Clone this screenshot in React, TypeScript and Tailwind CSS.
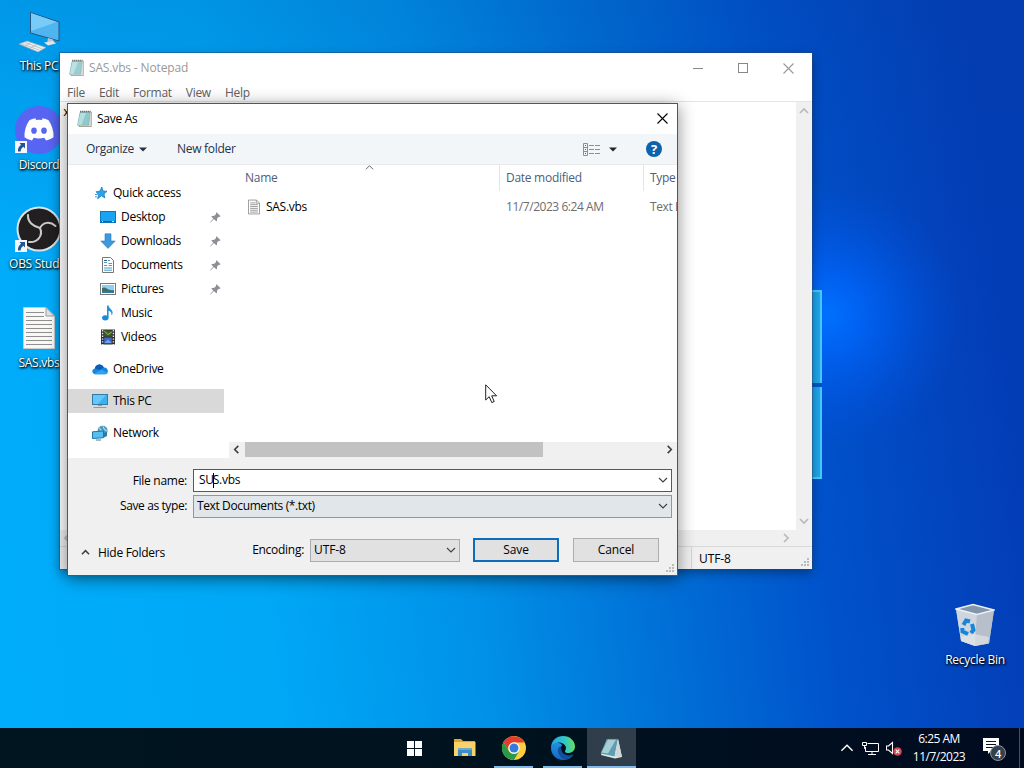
import type { ReactNode } from "react";

type Direction = "up" | "down" | "left" | "right";

interface ChevronProps {
  dir: Direction;
  size?: number;
  weight?: number;
  className?: string;
}

interface NavItem {
  label: string;
  icon: ReactNode;
  pinned?: boolean;
  nested?: boolean;
  selected?: boolean;
  spaced?: boolean;
}

interface DesktopIconProps {
  label: string;
  className: string;
  shortcut?: boolean;
  children: ReactNode;
}

const chevronPaths: Record<Direction, string> = {
  up: "M1 7 L5 3 L9 7",
  down: "M1 3 L5 7 L9 3",
  left: "M7 1 L3 5 L7 9",
  right: "M3 1 L7 5 L3 9",
};

function Chevron({ dir, size = 10, weight = 1.1, className = "text-[#404040]" }: ChevronProps) {
  return (
    <svg width={size} height={size} viewBox="0 0 10 10" className={`shrink-0 ${className}`}>
      <path d={chevronPaths[dir]} fill="none" stroke="currentColor" strokeWidth={weight} />
    </svg>
  );
}

function CloseIcon({ size }: { size: number }) {
  return (
    <svg width={size} height={size} viewBox="0 0 11 11" className="shrink-0">
      <path d="M.5 .5 L10.5 10.5 M10.5 .5 L.5 10.5" stroke="currentColor" strokeWidth="1.1" />
    </svg>
  );
}

function NotepadIcon({ faded = false }: { faded?: boolean }) {
  return (
    <svg width="16" height="18" viewBox="0 0 16 18" className={`shrink-0 ${faded ? "opacity-90" : ""}`}>
      <path d="M4.5 2 H15.3 L15.3 16.5 H3Z" fill="#e3e6df" stroke="#8b8772" strokeWidth=".7" />
      <path d="M4 2.5 H14 L12.8 15.3 H1.5Z" fill="#8fc9cd" stroke="#6fa5a9" strokeWidth=".5" />
      <path d="M4.4 3 H10 L5.5 15 H2Z" fill="#b5dedf" />
      <path d="M4.3 1.6 H14.7" stroke="#444" strokeWidth="1.5" strokeDasharray="1 1" />
    </svg>
  );
}

function PageIcon({ width, height }: { width: number; height: number }) {
  return (
    <svg width={width} height={height} viewBox="0 0 13 16" className="shrink-0">
      <path d="M.5 .5 H9.2 L12.5 3.8 V15.5 H.5Z" fill="#fff" stroke="#888" strokeWidth=".9" />
      <path d="M9 .5 V4 H12.5" fill="none" stroke="#888" strokeWidth=".8" />
      <path d="M2.3 3.5 H8 M2.3 5.5 H10.7 M2.3 7.5 H10.7 M2.3 9.5 H10.7 M2.3 11.5 H10.7 M2.3 13.5 H10.7" stroke="#8a8a8a" strokeWidth=".9" />
    </svg>
  );
}

function PinIcon() {
  return (
    <svg width="11" height="11" viewBox="0 0 11 11" className="shrink-0">
      <path d="M6.5 .3 L10.6 4.3 L9.4 5 L8.8 4.8 L7.1 6.5 L7 8.8 L6.2 9.3 L4 7.1 L.5 10.6 L.2 10.3 L3.3 6.6 L1.4 4.8 L2 4 L4.4 3.8 L6.1 2.1 L5.9 1.2Z" fill="#8c8f94" />
    </svg>
  );
}

function StarIcon() {
  return (
    <svg width="16" height="16" viewBox="0 0 16 16">
      <path d="M9.8 2 L11 6 L15 6.3 L12 8.9 L12.9 13 L9.4 10.8 L5.6 13.8 L6.8 9.6 L4 6.8 L8 6.1Z" fill="#2ba2ea" stroke="#167fc5" strokeWidth=".8" />
      <path d="M3 9.5 H5.8 M3 11.8 H5" stroke="#3a98d5" />
    </svg>
  );
}

function DesktopGlyph() {
  return (
    <svg width="16" height="16" viewBox="0 0 16 16">
      <rect x=".5" y="2.5" width="15" height="11" fill="#18a4f2" stroke="#1177b9" />
      <path d="M1 12.5 H15" stroke="#0b62a1" />
      <path d="M2 12.5 H3 M12 12.5 H14" stroke="#b9e7ff" />
    </svg>
  );
}

function DownloadGlyph() {
  return (
    <svg width="16" height="16" viewBox="0 0 16 16">
      <path d="M5 .8 H11 V8 H15.2 L8 15.4 L.8 8 H5Z" fill="#3f98d9" stroke="#2a7cbd" strokeWidth=".6" />
    </svg>
  );
}

function DocumentGlyph() {
  return (
    <svg width="16" height="16" viewBox="0 0 16 16">
      <path d="M2.5 .5 H10.5 L13.5 3.5 V15.5 H2.5Z" fill="#fff" stroke="#777" />
      <path d="M4 5.5 H7 M4 8.5 H7 M4 11 H12 M4 13.2 H12 M8.5 6.5 H12 M8.5 8.5 H12 M8 3.5 H10" stroke="#4a9ac9" />
      <path d="M4 3.5 H7" stroke="#315c7c" />
    </svg>
  );
}

function PictureGlyph() {
  return (
    <svg width="16" height="16" viewBox="0 0 16 16">
      <rect x=".5" y="2.5" width="15" height="11" fill="#fff" stroke="#777" />
      <rect x="2" y="4" width="12" height="8" fill="#8fd0ee" />
      <path d="M2 7 Q5 5.5 8 8.2 Q11 9.5 14 9 V12 H2Z" fill="#3e706b" />
      <path d="M2 10.5 H14 V12 H2Z" fill="#3179a8" />
    </svg>
  );
}

function MusicGlyph() {
  return (
    <svg width="16" height="16" viewBox="0 0 16 16">
      <ellipse cx="5.3" cy="12.8" rx="3.2" ry="2.6" fill="#1689d8" />
      <path d="M7 .5 H8.6 C8.6 3.5 13 4.5 12.6 8 C12.4 9.5 11.8 10 11.3 10.3 C12 7.8 10.5 6.3 8.6 5.8 V12.5 H7Z" fill="#1c94e4" />
    </svg>
  );
}

function VideoGlyph() {
  return (
    <svg width="16" height="16" viewBox="0 0 16 16">
      <rect x="1" y=".5" width="14" height="15" fill="#2e2e30" />
      <path d="M2.6 1 V16 M13.4 1 V16" stroke="#e9e9e9" strokeWidth="1.4" strokeDasharray="1.4 1.4" />
      <rect x="4.2" y="1.5" width="7.6" height="6" fill="#3b5c33" />
      <path d="M4.2 2 L8 5.5 L11.8 3" stroke="#a9ba3d" fill="none" />
      <rect x="4.2" y="8.5" width="7.6" height="6" fill="#3d67c8" />
      <path d="M4.2 14 L8 10.5 L11.8 14Z" fill="#6fa3ed" />
    </svg>
  );
}

function CloudGlyph() {
  return (
    <svg width="16" height="16" viewBox="0 0 16 16">
      <path d="M3.5 13.2 C-.5 13.2 -.7 8 2.8 7.4 C3.6 3 9.8 1.6 11.8 6.5 C16.5 6 17.5 13.2 13 13.2Z" fill="#1586dc" />
      <path d="M2.8 7.4 C3.6 3 9.8 1.6 11.8 6.5 L8 9Z" fill="#0c5eb5" />
      <path d="M2 12.9 L9.5 8.6 L15.5 12 C15 13 14 13.2 13 13.2 H3.5Z" fill="#2ba5ef" />
    </svg>
  );
}

function ComputerGlyph() {
  return (
    <svg width="16" height="16" viewBox="0 0 16 16">
      <rect x=".5" y="1.5" width="15" height="10" fill="#38b1f1" stroke="#3779a3" />
      <path d="M1 2 H14 L6 11 H1Z" fill="#65c8f8" />
      <path d="M6 12.5 H10 M1.5 14.5 H14.5" stroke="#76a3bd" />
    </svg>
  );
}

function NetworkGlyph() {
  return (
    <svg width="16" height="16" viewBox="0 0 16 16">
      <circle cx="10.6" cy="5.8" r="5" fill="#4b97bb" />
      <path d="M7 3 Q10 4.5 8.5 7 M11 1.3 Q12 5 15 6" stroke="#a8d9e7" strokeWidth="1.2" fill="none" />
      <path d="M.5 6.8 L11.5 6 V12.7 L.5 13.5Z" fill="#54bff1" stroke="#2375a2" />
      <path d="M12 8 L15 7 V11 L12 12.5Z" fill="#2e79aa" />
      <path d="M4 15 H9" stroke="#3b7ea3" />
    </svg>
  );
}

const navItems: NavItem[] = [
  { label: "Quick access", icon: <StarIcon /> },
  { label: "Desktop", icon: <DesktopGlyph />, nested: true, pinned: true },
  { label: "Downloads", icon: <DownloadGlyph />, nested: true, pinned: true },
  { label: "Documents", icon: <DocumentGlyph />, nested: true, pinned: true },
  { label: "Pictures", icon: <PictureGlyph />, nested: true, pinned: true },
  { label: "Music", icon: <MusicGlyph />, nested: true },
  { label: "Videos", icon: <VideoGlyph />, nested: true },
  { label: "OneDrive", icon: <CloudGlyph />, spaced: true },
  { label: "This PC", icon: <ComputerGlyph />, spaced: true, selected: true },
  { label: "Network", icon: <NetworkGlyph />, spaced: true },
];

function Wallpaper() {
  return (
    <svg width="1024" height="768" className="absolute inset-0">
      <defs>
        <linearGradient id="sky" x1="0" y1="520" x2="1010" y2="400" gradientUnits="userSpaceOnUse">
          <stop offset="0" stopColor="#00adfb" />
          <stop offset=".25" stopColor="#00a8f6" />
          <stop offset=".45" stopColor="#0092e8" />
          <stop offset=".64" stopColor="#006fd6" />
          <stop offset=".8" stopColor="#0052cb" />
          <stop offset="1" stopColor="#033db6" />
        </linearGradient>
        <linearGradient id="topShade" x1="0" x2="0" y1="0" y2="1">
          <stop offset="0" stopColor="#003c98" stopOpacity=".18" />
          <stop offset=".35" stopColor="#003c98" stopOpacity="0" />
        </linearGradient>
        <radialGradient id="glow" cx="828" cy="315" r="135" gradientUnits="userSpaceOnUse">
          <stop offset="0" stopColor="#0070ff" />
          <stop offset=".3" stopColor="#0064f8" stopOpacity=".8" />
          <stop offset="1" stopColor="#0050dd" stopOpacity="0" />
        </radialGradient>
        <linearGradient id="pane" x1="0" x2="1">
          <stop offset="0" stopColor="#1590e2" />
          <stop offset="1" stopColor="#22a9ea" />
        </linearGradient>
      </defs>
      <rect width="1024" height="768" fill="url(#sky)" />
      <rect width="1024" height="768" fill="url(#topShade)" />
      <rect width="1024" height="768" fill="url(#glow)" />
      <path d="M800 290 H822 V383 H800Z M800 387 H822 V479 H800Z" fill="url(#pane)" />
      <path d="M800 383 H822 V387 H800Z" fill="#0056c4" />
      <path d="M800 291 H821 V383 M821 387 V478 H800" fill="none" stroke="#45cbf8" strokeWidth="2" />
    </svg>
  );
}

function ShortcutBadge() {
  return (
    <svg width="12" height="12" viewBox="0 0 12 12" className="absolute left-[14px] top-[35px]">
      <rect width="12" height="12" fill="#f4f7fb" />
      <path d="M4.5 2 H10 V7.5 L8.3 5.8 Q5.8 7.5 5.6 10.5 H3 Q2.5 6.5 6 3.7Z" fill="#22569b" />
    </svg>
  );
}

function DesktopIcon({ label, className, shortcut, children }: DesktopIconProps) {
  return (
    <div className={`absolute flex w-[76px] flex-col items-center ${className}`}>
      <div className="flex h-12 items-center justify-center">{children}</div>
      {shortcut && <ShortcutBadge />}
      <span className="mt-[3px] whitespace-nowrap text-white [text-shadow:1px_1px_2px_#000,0_1px_3px_#000]">
        {label}
      </span>
    </div>
  );
}

function PcArt() {
  return (
    <svg width="44" height="44" viewBox="0 0 44 44">
      <path d="M13.5 3.5 L42 13 V32 L13.5 24Z" fill="#50b4ef" stroke="#245780" />
      <path d="M14 4 L40 13 L14 22Z" fill="#79cbf8" />
      <path d="M31 29 L36 30.5 L37 34 L30 35Z" fill="#bcc5cb" />
      <path d="M27 33.5 L36 32 L39 34.5 L31 36.5Z" fill="#e1e4e6" />
      <path d="M2 35 L10 32 L29 38.5 L21 43Z" fill="#eceff1" stroke="#9ba8b0" strokeWidth=".7" />
      <path d="M5 35 L22 41 M8 33.5 L25 39.8 M8 37 L14 33.5 M13 39 L20 35.5" stroke="#aab4ba" strokeWidth=".7" />
    </svg>
  );
}

function DiscordArt() {
  return (
    <svg width="48" height="48" viewBox="0 0 48 48">
      <circle cx="24" cy="24" r="24" fill="#5865f2" />
      <path d="M14.4 14.3 Q17.4 12.7 20.3 12.2 L21.2 14 Q24 13.5 26.8 14 L27.7 12.2 Q30.7 12.7 33.6 14.3 Q39 22.3 38.5 31.2 Q35.2 33.8 31 34.5 L29.3 31.8 Q24 33.3 18.7 31.8 L17 34.5 Q12.8 33.8 9.5 31.2 Q9 22 14.4 14.3Z" fill="#fff" />
      <ellipse cx="19" cy="24.7" rx="2.8" ry="3.1" fill="#5865f2" />
      <ellipse cx="29" cy="24.7" rx="2.8" ry="3.1" fill="#5865f2" />
    </svg>
  );
}

function ObsArt() {
  return (
    <svg width="46" height="46" viewBox="0 0 46 46">
      <circle cx="23" cy="23" r="21.5" fill="#221f21" stroke="#dde3e7" strokeWidth="2" />
      <g fill="none" stroke="#cbcbce" strokeWidth="2" strokeLinecap="round">
        <path d="M12 9 C11.5 16 17 20.5 24 22" />
        <path d="M24 22 C27 16 34 15 39.5 20" />
        <path d="M24 22 C27.5 30 21 37 13 36" />
      </g>
    </svg>
  );
}

function TextFileArt() {
  return (
    <svg width="32" height="42" viewBox="0 0 32 42">
      <path d="M.5 .5 H23 L31.5 9 V41.5 H.5Z" fill="#f8f8f7" stroke="#c8cccd" />
      <path d="M23 .5 V9 H31.5Z" fill="#dfe3e4" stroke="#969c9f" />
      <path d="M3 5.5 H21 M3 9.5 H21 M3 13.5 H29 M3 17.5 H29 M3 21.5 H29 M3 25.5 H29 M3 29.5 H29 M3 33.5 H29 M3 37.5 H29" stroke="#8f8f8f" />
    </svg>
  );
}

function BinArt() {
  return (
    <svg width="40" height="44" viewBox="0 0 40 44">
      <path d="M1 6 L18 1.5 L39 7 L34 40.5 L20 43 L6 38Z" fill="#bfc8d2" />
      <path d="M1 6 L22 11.5 L20 43 L6 38Z" fill="#d0d6dd" />
      <path d="M22 11.5 L39 7 L34 40.5 L20 43Z" fill="#b6bfca" />
      <path d="M1 6 L18 1.5 L39 7 L22 11.5Z" fill="#8295ad" stroke="#edf1f4" strokeWidth="1.4" />
      <path d="M6 34 L19 31 L34 34 L33 40 L20 43 L6 38Z" fill="#e8e8e7" opacity=".6" />
      <g fill="none" stroke="#1686dc" strokeWidth="4">
        <path d="M8.5 22 L11 17.5 L15 18.5" />
        <path d="M17 21 L18.5 27 L16 30" />
        <path d="M13 31 L7.5 28.5 L7.3 25" />
      </g>
    </svg>
  );
}

function ResizeGrip({ className }: { className: string }) {
  return (
    <svg width="9" height="9" viewBox="0 0 9 9" className={`absolute ${className}`}>
      <path d="M6 1 h2 M3 4 h2 M6 4 h2 M0 7 h2 M3 7 h2 M6 7 h2" stroke="#bcbcbc" strokeWidth="2" />
    </svg>
  );
}

function NotepadWindow() {
  return (
    <div className="absolute left-[60px] top-[53px] flex h-[516px] w-[752px] flex-col bg-white shadow-[0_0_0_1px_rgba(40,70,110,0.45),0_4px_10px_rgba(0,0,0,0.35)]">
      <div className="flex h-[30px] shrink-0 items-center pl-2 text-[#999]">
        <NotepadIcon faded />
        <span className="ml-[5px] flex-1 tracking-[-0.15px]">SAS.vbs - Notepad</span>
        <div className="mr-[18px] flex items-center gap-[35px]">
          <span className="h-px w-[10px] bg-[#888]" />
          <span className="size-[10px] border border-[#888]" />
          <CloseIcon size={11} />
        </div>
      </div>
      <div className="flex h-[18px] shrink-0 items-center gap-[14px] pl-[7px] pt-0.5 text-[#606060]">
        <span>File</span>
        <span>Edit</span>
        <span>Format</span>
        <span>View</span>
        <span>Help</span>
      </div>
      <div className="flex h-[429px] shrink-0 border-t border-[#e5e5e5]">
        <div className="flex-1 pl-[3px] pt-[3px] font-mono text-black">x</div>
        <div className="flex w-4 flex-col items-center justify-between bg-[#f0f0f0] py-1">
          <Chevron dir="up" weight={1.7} className="text-[#b9b9b9]" />
          <Chevron dir="down" weight={1.7} className="text-[#b9b9b9]" />
        </div>
      </div>
      <div className="flex h-4 shrink-0 items-center justify-between bg-[#f0f0f0] pl-0.5 pr-[21px]">
        <Chevron dir="left" weight={1.7} className="text-[#b9b9b9]" />
        <Chevron dir="right" weight={1.7} className="text-[#b9b9b9]" />
      </div>
      <div className="flex flex-1 justify-end border-t border-[#d9d9d9] bg-[#f0f0f0]">
        <div className="flex w-[121px] items-center border-l border-[#d4d4d4] pl-[7px] pt-px tracking-[-0.1px]">UTF-8</div>
      </div>
      <ResizeGrip className="bottom-[2px] right-[2px]" />
    </div>
  );
}

function DialogToolbar() {
  return (
    <div className="flex h-[31px] shrink-0 items-center border-b border-[#e8eaec] bg-[#f3f6f8] pl-[18px] pr-[15px] text-[#24324c]">
      <span>Organize</span>
      <svg width="8" height="5" viewBox="0 0 8 5" className="ml-[5px]">
        <path d="M0 .5 H8 L4 4.5Z" fill="#263040" />
      </svg>
      <span className="ml-[30px] flex-1">New folder</span>
      <svg width="17" height="13" viewBox="0 0 17 13">
        <path d="M.5 .5 H4.5 V12.5 H.5Z M.5 4.5 H4.5 M.5 8.5 H4.5" fill="none" stroke="#88909a" />
        <path d="M2 2.5 h1 M2 6.5 h1 M2 10.5 h1" stroke="#596069" />
        <path d="M6 2.5 h5 M12 2.5 h5 M6 6.5 h5 M12 6.5 h5 M6 10.5 h5 M12 10.5 h5" stroke="#88909a" />
      </svg>
      <svg width="8" height="5" viewBox="0 0 8 5" className="ml-[9px]">
        <path d="M0 .5 H8 L4 4.5Z" fill="#20252b" />
      </svg>
      <span className="ml-[29px] flex size-4 items-center justify-center rounded-full bg-[#0b63ad] text-[13px] font-bold leading-4 text-white">
        ?
      </span>
    </div>
  );
}

function NavigationPane() {
  return (
    <div className="w-[161px] shrink-0 pt-4">
      {navItems.map((item) => (
        <div
          key={item.label}
          className={`flex h-6 w-[156px] items-center ${item.nested ? "pl-8" : "pl-6"} ${
            item.spaced ? "mt-2" : ""
          } ${item.selected ? "bg-[#d9d9d9]" : ""}`}
        >
          {item.icon}
          <span className="ml-[5px] flex-1">{item.label}</span>
          {item.pinned && (
            <span className="mr-[3px]">
              <PinIcon />
            </span>
          )}
        </div>
      ))}
    </div>
  );
}

function FileList() {
  return (
    <div className="flex min-w-0 flex-1 flex-col">
      <div className="relative flex h-[26px] shrink-0 items-center text-[#4c607a]">
        <div className="flex h-full w-[271px] items-center border-r border-[#e5e5e5] pl-4">Name</div>
        <div className="flex h-full w-36 items-center border-r border-[#e5e5e5] pl-1.5">Date modified</div>
        <div className="pl-1.5">Type</div>
        <Chevron dir="up" size={9} weight={1.1} className="absolute left-[136px] top-[-2px] text-[#666]" />
      </div>
      <div className="mt-[5px] flex h-[22px] shrink-0 items-center overflow-hidden whitespace-nowrap text-[#6d6d6d]">
        <div className="flex w-[271px] shrink-0 items-center pl-[19px] text-black">
          <PageIcon width={12} height={16} />
          <span className="ml-1.5">SAS.vbs</span>
        </div>
        <div className="w-36 shrink-0 pl-1.5 tracking-[-0.45px]">11/7/2023 6:24 AM</div>
        <div className="shrink-0 pl-1.5 tracking-[-0.4px]">Text Document</div>
      </div>
      <div className="flex-1" />
      <div className="flex h-4 shrink-0 items-start bg-[#f0f0f0] px-[3px]">
        <Chevron dir="left" size={9} weight={1.8} className="mt-[3px] text-[#404040]" />
        <div className="ml-1 h-[15px] w-[298px] bg-[#c2c2c2]" />
        <div className="flex-1" />
        <Chevron dir="right" size={9} weight={1.8} className="mt-[3px] text-[#404040]" />
      </div>
    </div>
  );
}

function DialogFooter() {
  return (
    <div className="h-[117px] shrink-0 bg-[#f0f0f0] pt-[11px]">
      <div className="flex h-[22px] items-center">
        <span className="w-[119px] pt-px text-right">File name:</span>
        <div className="ml-1.5 flex h-[23px] w-[479px] items-center border border-[#0f6fae] bg-white pl-[5px] pr-[3px]">
          <span>SU</span>
          <span className="-mx-px h-[15px] w-px bg-black" />
          <span className="flex-1">S.vbs</span>
          <Chevron dir="down" />
        </div>
      </div>
      <div className="mt-1 flex h-[22px] items-center">
        <span className="w-[119px] text-right tracking-[-0.4px]">Save as type:</span>
        <div className="ml-1.5 flex h-[23px] w-[479px] items-center border border-[#8499a9] bg-[#e1e6ea] pl-[3px] pr-[3px]">
          <span className="flex-1 tracking-[-0.38px]">Text Documents (*.txt)</span>
          <Chevron dir="down" />
        </div>
      </div>
      <div className="mt-[21px] flex h-6 items-center">
        <div className="flex w-[168px] items-center pl-[13px] pt-[5px]">
          <Chevron dir="up" size={9} weight={1.7} />
          <span className="ml-2">Hide Folders</span>
        </div>
        <span className="w-[68px] text-right">Encoding:</span>
        <div className="ml-1.5 flex h-[23px] w-[150px] items-center border border-[#acacac] bg-[#e1e1e1] pl-[3px] pr-[3px]">
          <span className="flex-1 tracking-[-0.1px]">UTF-8</span>
          <Chevron dir="down" />
        </div>
        <button type="button" className="ml-[13px] h-6 w-[86px] border-2 border-[#0f6cbd] bg-[#e1e1e1] tracking-[-0.1px]">
          Save
        </button>
        <button type="button" className="ml-3.5 h-6 w-[86px] border border-[#adadad] bg-[#e1e1e1] tracking-[-0.1px]">
          Cancel
        </button>
      </div>
    </div>
  );
}

function SaveAsDialog() {
  return (
    <div className="absolute left-[67px] top-[103px] flex h-[473px] w-[611px] flex-col border border-[#555] bg-white shadow-[0_3px_16px_rgba(0,0,0,0.45)]">
      <div className="flex h-[30px] shrink-0 items-center justify-between pl-2 pr-[9px]">
        <div className="flex items-center">
          <NotepadIcon />
          <span className="ml-[5px]">Save As</span>
        </div>
        <span className="pb-0.5">
          <CloseIcon size={11} />
        </span>
      </div>
      <DialogToolbar />
      <div className="flex min-h-0 flex-1">
        <NavigationPane />
        <FileList />
      </div>
      <DialogFooter />
      <ResizeGrip className="bottom-[2px] right-[2px]" />
    </div>
  );
}

function FolderArt() {
  return (
    <svg width="22" height="20" viewBox="0 0 22 20">
      <path d="M0 1 H7 L9 3 H21 V18 H0Z" fill="#e0a526" />
      <path d="M0 4 H21.5 V18 H0Z" fill="#fbd16a" />
      <path d="M4 10 H18 V18 H14 V15 H8 V18 H4Z" fill="#3d8cc4" />
      <path d="M4 10 H18 V12 H4Z" fill="#67a9cf" />
    </svg>
  );
}

function ChromeArt() {
  return (
    <svg width="24" height="24" viewBox="0 0 24 24">
      <circle cx="12" cy="12" r="12" fill="#ffcd40" />
      <path d="M1.6 6 A12 12 0 0 1 22.4 6.5 H12 A6 6 0 0 0 6.8 15Z" fill="#e33b2e" />
      <path d="M1.6 6 A12 12 0 0 0 12 24 L17.2 15 A6 6 0 0 1 6.8 15Z" fill="#269a4a" />
      <circle cx="12" cy="12" r="5.7" fill="#fff" />
      <circle cx="12" cy="12" r="4.5" fill="#347be0" />
    </svg>
  );
}

function EdgeArt() {
  return (
    <svg width="24" height="24" viewBox="0 0 24 24">
      <defs>
        <linearGradient id="edgeTop" x1="0" y1=".5" x2="1" y2=".4">
          <stop offset="0" stopColor="#1fa2e4" />
          <stop offset=".55" stopColor="#2dc5cf" />
          <stop offset="1" stopColor="#69e05a" />
        </linearGradient>
        <linearGradient id="edgeBody" x1="0" y1="0" x2="0" y2="1">
          <stop offset="0" stopColor="#2291df" />
          <stop offset="1" stopColor="#1467c4" />
        </linearGradient>
      </defs>
      <path d="M0 12 C0 4 6 0 12 0 C19 0 24 5 24 10.5 C24 15 20.5 17 17.3 17 C14 17 13.5 15.5 14.3 14.5 C16.8 10 12 6 7.5 6.5 C3.5 7 1 9.5 0 12Z" fill="url(#edgeTop)" />
      <path d="M0 12 C1 8.5 4.5 6 8 7 C10 7.5 11 9 11.2 9.5 C8 11 8 17.5 12.5 20 C16 22 20 21 22.3 18.5 C20 22.5 16 24 12.5 24 C5 24 0 18.5 0 12Z" fill="url(#edgeBody)" />
      <path d="M8.3 10.5 C5 15 8 21 13.5 23.8 C17 23.8 20.8 21.5 22.5 18.3 C18 20.8 10.5 19 10.3 13Z" fill="#124f9f" />
    </svg>
  );
}

function TaskbarNotepadArt() {
  return (
    <svg width="24" height="24" viewBox="0 0 24 24">
      <path d="M7 3 H18 L22 21 L15 22.5 L1 19Z" fill="#e4e8e6" />
      <path d="M7 3 H18 L14.5 20.5 L.5 17.5Z" fill="#5f9eb2" />
      <path d="M8 3.5 H16 L8 17.5 L1.5 16.5Z" fill="#a5ced6" />
      <path d="M18 3 L14.5 20.5 L22 21Z" fill="#cfd8d8" />
      <path d="M7 3 H18" stroke="#4b5a60" strokeWidth="1.2" strokeDasharray="1 .8" />
    </svg>
  );
}

function TaskButton({ running, active, children }: { running?: boolean; active?: boolean; children: ReactNode }) {
  return (
    <div className={`relative flex h-10 w-[49px] items-center justify-center ${active ? "bg-[#303d4a]" : ""}`}>
      {children}
      {running && (
        <span className={`absolute bottom-0 h-0.5 bg-[#80b9eb] ${active ? "inset-x-0" : "inset-x-[5px]"}`} />
      )}
    </div>
  );
}

function Taskbar() {
  return (
    <div className="absolute inset-x-0 bottom-0 flex h-10 items-center bg-linear-to-r from-[#001520] via-[#00121e] to-[#000b20] pl-[390px] text-white">
      <TaskButton>
        <svg width="15" height="15" viewBox="0 0 15 15">
          <path d="M0 0 H7 V7 H0Z M8 0 H15 V7 H8Z M0 8 H7 V15 H0Z M8 8 H15 V15 H8Z" fill="#fff" />
        </svg>
      </TaskButton>
      <div className="ml-px">
        <TaskButton>
          <FolderArt />
        </TaskButton>
      </div>
      <TaskButton running>
        <ChromeArt />
      </TaskButton>
      <TaskButton running>
        <EdgeArt />
      </TaskButton>
      <TaskButton running active>
        <TaskbarNotepadArt />
      </TaskButton>
      <div className="ml-auto flex h-full items-center">
        <Chevron dir="up" size={14} weight={1} className="text-white" />
        <svg width="17" height="15" viewBox="0 0 17 15" className="ml-2">
          <path d="M5.5 2.5 H16.5 V10.5 H3.5 V6 M10 10.5 V13.5 M6 13.5 H14" fill="none" stroke="#fff" />
          <path d="M.5 1.5 H4.5 V4.5 H.5Z M2.5 4.5 V7.5 H3.5" fill="none" stroke="#fff" />
        </svg>
        <svg width="17" height="15" viewBox="0 0 17 15" className="ml-[7px]">
          <path d="M.5 5 H2.5 L6.5 1.5 V12.5 L2.5 9 H.5Z" fill="none" stroke="#fff" strokeWidth="1.1" />
          <circle cx="11.5" cy="10.5" r="4.3" fill="#d74450" />
          <path d="M9.7 8.7 L13.3 12.3 M13.3 8.7 L9.7 12.3" stroke="#fff" strokeWidth="1.1" />
        </svg>
        <div className="ml-[7px] w-[58px] text-center leading-[18px] tracking-[-0.5px]">
          <div>6:25 AM</div>
          <div className="-mx-2">11/7/2023</div>
        </div>
        <div className="relative ml-[15px] h-[22px] w-[25px]">
          <svg width="25" height="22" viewBox="0 0 25 22">
            <path d="M0 1 H16 V14 H8 L5 17 V14 H0Z" fill="#fff" />
            <path d="M3 4.5 H13 M3 7.5 H13 M3 10.5 H13" stroke="#07152a" />
          </svg>
          <span className="absolute left-[7px] top-2 flex size-4 items-center justify-center rounded-full border border-[#8c939c] bg-[#35404d] text-[11px] font-semibold leading-none">
            4
          </span>
        </div>
        <span className="ml-[11px] mr-1 h-full w-px bg-[#46515f]" />
      </div>
    </div>
  );
}

export default function App() {
  return (
    <div className="relative h-[768px] w-[1024px] overflow-hidden font-['Open_Sans','Noto_Sans',sans-serif] text-[12px] leading-4 tracking-[-0.28px] text-black">
      <Wallpaper />
      <DesktopIcon label="This PC" className="left-px top-[7px]">
        <PcArt />
      </DesktopIcon>
      <DesktopIcon label="Discord" className="left-px top-[106px]" shortcut>
        <DiscordArt />
      </DesktopIcon>
      <DesktopIcon label="OBS Studio" className="left-px top-[205px]" shortcut>
        <ObsArt />
      </DesktopIcon>
      <DesktopIcon label="SAS.vbs" className="left-px top-[304px]">
        <TextFileArt />
      </DesktopIcon>
      <DesktopIcon label="Recycle Bin" className="left-[937px] top-[601px]">
        <BinArt />
      </DesktopIcon>
      <NotepadWindow />
      <SaveAsDialog />
      <svg width="13" height="20" viewBox="0 0 13 20" className="absolute left-[485px] top-[384px]">
        <path d="M.7 .8 V16 L4.2 12.7 L6.8 18.6 L9.2 17.5 L6.7 11.8 H11.6Z" fill="#fff" stroke="#222" />
      </svg>
      <Taskbar />
    </div>
  );
}
